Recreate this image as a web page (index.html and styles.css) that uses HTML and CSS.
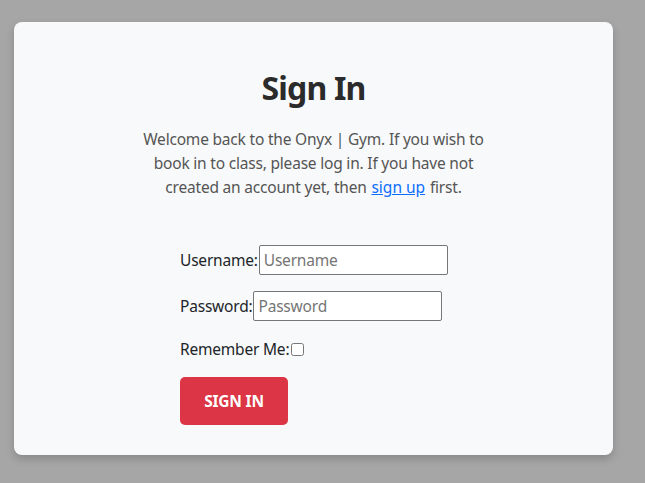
FILE: index.html
```html
<!DOCTYPE html>
<html lang="en">
<head>
<meta charset="utf-8">
<title>Sign In</title>
<link rel="stylesheet" href="styles.css">
</head>
<body>
<main class="card">
  <h1 class="title">Sign In</h1>
  <p class="intro">Welcome back to the Onyx | Gym. If you wish to book in to class, please log in. If you have not created an account yet, then <a href="#" class="link">sign up</a> first.</p>
  <form class="form">
    <p class="row"><label for="u">Username:</label> <input id="u" class="field" type="text" placeholder="Username"></p>
    <p class="row"><label for="p">Password:</label> <input id="p" class="field" type="password" placeholder="Password"></p>
    <p class="row row-check"><label for="r">Remember Me:</label> <input id="r" class="check" type="checkbox"></p>
    <button type="button" class="btn">Sign In</button>
  </form>
</main>
</body>
</html>
```
FILE: styles.css
```css
html, body {
  margin: 0;
  padding: 0;
}
body {
  background: #a6a6a6;
  font-family: "Noto Sans", "Open Sans", sans-serif;
  font-size: 15.5px;
  letter-spacing: -0.2px;
  color: #212529;
  padding: 22px 0 0 14px;
  height: 483px;
  box-sizing: border-box;
}
.card {
  width: 599px;
  height: 433px;
  box-sizing: border-box;
  background: #f8f9fa;
  border-radius: 8px;
  box-shadow: 0 4px 8px rgba(0, 0, 0, 0.18);
  padding: 47px 0 0 0;
  display: flex;
  flex-direction: column;
  align-items: center;
}
.title {
  margin: 0 0 20px;
  font-size: 32px;
  letter-spacing: -0.8px;
  line-height: 38px;
  font-weight: 700;
  color: #2b2b2b;
  text-align: center;
}
.intro {
  margin: 0;
  width: 348px;
  text-align: center;
  line-height: 24px;
  color: #555555;
}
.link {
  color: #0d6efd;
  text-decoration: underline;
  letter-spacing: 0;
  margin: 0 1px;
}
.form {
  align-self: flex-start;
  margin: 46px 0 0 166px;
}
.row {
  margin: 0 0 16px;
  line-height: 30px;
  display: flex;
  align-items: center;
  gap: 1px;
}
.row-check {
  line-height: 24px;
  gap: 2px;
}
.field {
  width: 189px;
  height: 30px;
  box-sizing: border-box;
  border: 1px solid #767676;
  border-radius: 2px;
  padding: 1px 4px;
  font: inherit;
  letter-spacing: -0.2px;
  background: #fff;
}
.field::placeholder {
  color: #757575;
}
.check {
  margin: 0;
  width: 13px;
  height: 13px;
}
.btn {
  margin-top: 0;
  width: 108px;
  height: 48px;
  border: none;
  border-radius: 5px;
  background: #dc3545;
  color: #fff;
  font: inherit;
  font-weight: 700;
  letter-spacing: -0.2px;
  text-transform: uppercase;
}
```
